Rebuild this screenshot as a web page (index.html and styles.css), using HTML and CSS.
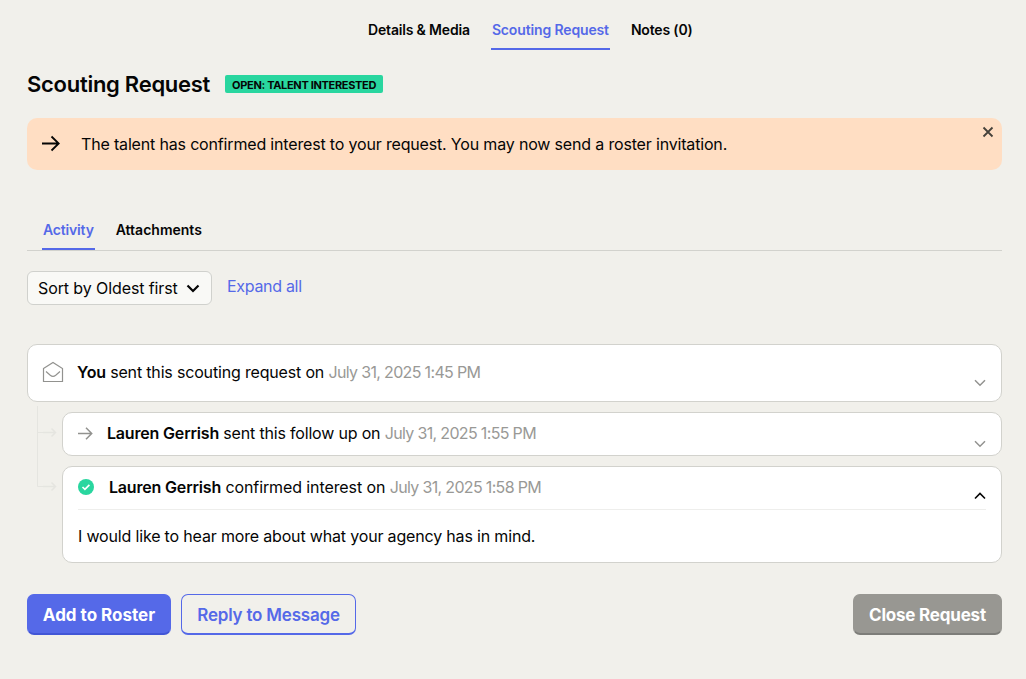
FILE: index.html
```html
<!DOCTYPE html>
<html lang="en">
<head>
    <meta charset="UTF-8">
    <meta name="viewport" content="width=device-width, initial-scale=1.0">
    <title>Scouting Request</title>
    <link rel="stylesheet" href="styles.css">
</head>
<body>
    <nav class="tabs top-tabs">
        <a class="tab t-details">Details &amp; Media</a>
        <a class="tab t-scouting active">Scouting Request</a>
        <a class="tab t-notes">Notes (0)</a>
    </nav>

    <main class="page">
        <header class="heading">
            <h1>Scouting Request</h1>
            <span class="badge">OPEN: TALENT INTERESTED</span>
        </header>

        <div class="notice">
            <svg class="notice-arrow" width="20" height="18" viewBox="0 0 20 18"><path d="M1 8.500h17M10.500 1.500l7.200 7-7.200 7"/></svg>
            <p>The talent has confirmed interest to your request. You may now send a roster invitation.</p>
            <svg class="notice-close" width="12" height="12" viewBox="0 0 12 12"><path d="M1.500 1.500l9 9M10.500 1.500l-9 9"/></svg>
        </div>

        <nav class="tabs sub-tabs">
            <a class="tab t-activity active">Activity</a>
            <a class="tab t-attach">Attachments</a>
        </nav>

        <div class="toolbar">
            <button class="sort"><span>Sort by Oldest first</span>
                <svg width="14" height="9" viewBox="0 0 14 9"><path d="M1.500 1.500L7 7l5.500-5.500"/></svg>
            </button>
            <a class="expand">Expand all</a>
        </div>

        <section class="card main-card">
            <svg class="mail" width="22" height="22" viewBox="0 0 22 22"><path d="M1.500 7.500L11 1.500l9.500 6V20.500H1.500z"/><path d="M4 10.500l4.300 3.700q2.700 2.200 5.400 0L18 10.500"/></svg>
            <p class="line line-sent"><b>You</b> sent this scouting request on <time>July 31, 2025 1:45 PM</time></p>
            <svg class="chevron" width="12" height="8" viewBox="0 0 12 8"><path d="M1 1.200l5 5 5-5"/></svg>
        </section>

        <div class="thread">
            <svg class="branch" width="26" height="92" viewBox="0 0 26 92">
                <path d="M1.500 0v80.500H19M1.500 26.500H19"/>
                <path class="heads" d="M7 26.500h12.500M15.500 22.500l4 4-4 4M7 80.500h12.500M15.500 76.500l4 4-4 4"/>
            </svg>
            <div class="replies">
                <section class="card follow">
                    <svg class="follow-arrow" width="15" height="13" viewBox="0 0 15 13"><path d="M0 6.500h13.500M8 .8l5.700 5.700L8 12.200"/></svg>
                    <p class="line line-follow"><b>Lauren Gerrish</b> sent this follow up on <time>July 31, 2025 1:55 PM</time></p>
                    <svg class="chevron" width="12" height="8" viewBox="0 0 12 8"><path d="M1 1.200l5 5 5-5"/></svg>
                </section>
                <section class="card confirmed">
                    <div class="confirmed-head">
                        <svg class="check" width="16" height="16" viewBox="0 0 16 16"><circle cx="8" cy="8" r="8"/><path d="M4.500 8l2.400 2.300 4.500-4.500"/></svg>
                        <p class="line line-confirm"><b>Lauren Gerrish</b> confirmed interest on <time>July 31, 2025 1:58 PM</time></p>
                        <svg class="chevron open" width="12" height="8" viewBox="0 0 12 8"><path d="M1 6.500l5-5 5 5"/></svg>
                    </div>
                    <p class="message">I would like to hear more about what your agency has in mind.</p>
                </section>
            </div>
        </div>

        <footer class="actions">
            <button class="btn btn-primary">Add to Roster</button>
            <button class="btn btn-outline">Reply to Message</button>
            <button class="btn btn-close">Close Request</button>
        </footer>
    </main>
</body>
</html>
```

FILE: styles.css
```css
* {
    box-sizing: border-box;
}

body {
    margin: 0;
    background: #f1f0eb;
    color: #050505;
    font-family: Inter, "Liberation Sans", sans-serif;
    font-size: 16px;
    line-height: 24px;
}

h1, p {
    margin: 0;
}

p, a, span, h1, button {
    white-space: nowrap;
}

svg {
    fill: none;
    stroke: currentColor;
    flex: none;
}

button {
    font: inherit;
    color: inherit;
}

/* tabs */
.tabs {
    display: flex;
    gap: 20px;
    font-size: 14px;
    font-weight: 600;
}

.tab {
    height: 32px;
    padding: 0 1px;
    border-bottom: 2px solid transparent;
    letter-spacing: -0.17px;
}

.tab.active {
    color: #5569e8;
    border-color: #5569e8;
}

.t-scouting {
    letter-spacing: -0.14px;
}

.t-attach {
    letter-spacing: 0;
}

.top-tabs {
    padding: 18px 0 0 367px;
}

.sub-tabs {
    margin-top: 48px;
    padding-left: 15px;
    border-bottom: 1px solid #d2d2cd;
}

.page {
    width: 975px;
    margin-left: 27px;
}

.heading {
    display: flex;
    align-items: center;
    gap: 15px;
    height: 32px;
    margin-top: 18px;
}

h1 {
    font-size: 22px;
    font-weight: 600;
    letter-spacing: -0.27px;
}

.badge {
    height: 18px;
    padding: 0 7px;
    border-radius: 2px;
    background: #29d69f;
    font-size: 11px;
    font-weight: 700;
    line-height: 20px;
    letter-spacing: -0.32px;
}

.notice {
    position: relative;
    display: flex;
    align-items: center;
    height: 52px;
    margin-top: 18px;
    padding-left: 14px;
    border-radius: 10px;
    background: #ffdec3;
    letter-spacing: -0.17px;
}

.notice-arrow {
    margin-right: 20px;
    stroke-width: 1.8;
}

.notice-close {
    position: absolute;
    top: 8px;
    right: 8px;
    color: #46413a;
    stroke-width: 1.8;
}

.toolbar {
    display: flex;
    gap: 15px;
    margin-top: 20px;
}

.sort {
    display: flex;
    align-items: center;
    justify-content: space-between;
    width: 185px;
    height: 34px;
    padding: 0 11px 0 10px;
    border: 1px solid #d0d1cd;
    border-radius: 6px;
    background: #f9f9f6;
    letter-spacing: -0.1px;
}

.sort svg {
    stroke-width: 2.2;
}

.expand {
    padding-top: 3px;
    color: #5569e8;
    letter-spacing: -0.3px;
}

/* activity cards */
.card {
    border: 1px solid #d2d2cd;
    border-radius: 10px;
    background: #fff;
}

.main-card, .follow {
    display: flex;
    padding: 0 15px;
}

.main-card {
    height: 58px;
    margin-top: 39px;
    padding-top: 15px;
}

.mail {
    margin: 1px 14px 0 -1px;
    color: #92928f;
    stroke-width: 1.2;
}

.chevron {
    margin: 19px 0 0 auto;
    color: #92928f;
    stroke-width: 1.5;
}

.chevron.open {
    color: #050505;
    stroke-width: 1.6;
}

.line {
    letter-spacing: -0.1px;
}

.line-sent {
    margin-left: -1px;
    letter-spacing: -0.17px;
}

.line-follow {
    letter-spacing: -0.18px;
}

b {
    font-weight: 600;
    letter-spacing: -0.18px;
}

time {
    color: #999996;
    letter-spacing: -0.66px;
}

.thread {
    display: flex;
    padding-left: 9px;
}

.branch {
    margin-top: 4px;
    color: #e5e5e0;
}

.heads {
    stroke-width: 1.5;
}

.replies {
    flex: 1;
    margin-top: 10px;
}

.follow {
    height: 44px;
    padding-top: 8px;
}

.follow-arrow {
    margin: 6px 14px 0 0;
    color: #92928f;
    stroke-width: 1.5;
}

.confirmed {
    height: 97px;
    margin-top: 10px;
    padding: 0 15px;
}

.confirmed-head {
    display: flex;
    height: 43px;
    padding-top: 8px;
    border-bottom: 1px solid #eeeeec;
}

.confirmed-head .chevron {
    margin-top: 17px;
}

.check {
    margin: 4px 15px 0 0;
}

.check circle {
    fill: #29d69f;
    stroke: none;
}

.check path {
    stroke: #fff;
    stroke-width: 1.7;
}

.message {
    margin-top: 14px;
    letter-spacing: -0.17px;
}

.actions {
    display: flex;
    gap: 10px;
    margin-top: 31px;
}

.btn {
    height: 41px;
    padding: 2px 0 0;
    border: 1px solid #5569e8;
    border-bottom: 2px solid #4256d6;
    border-radius: 7px;
    font-size: 17px;
    font-weight: 600;
    letter-spacing: -0.2px;
}

.btn-primary {
    width: 144px;
    background: #5569e8;
    color: #fff;
    font-weight: 700;
    letter-spacing: 0;
}

.btn-outline {
    width: 175px;
    background: transparent;
    border-color: #5569e8;
    color: #5569e8;
}

.btn-close {
    width: 149px;
    margin-left: auto;
    border-color: #989792;
    border-bottom-color: #7d7d79;
    background: #989792;
    color: #fff;
    font-weight: 700;
}
```
